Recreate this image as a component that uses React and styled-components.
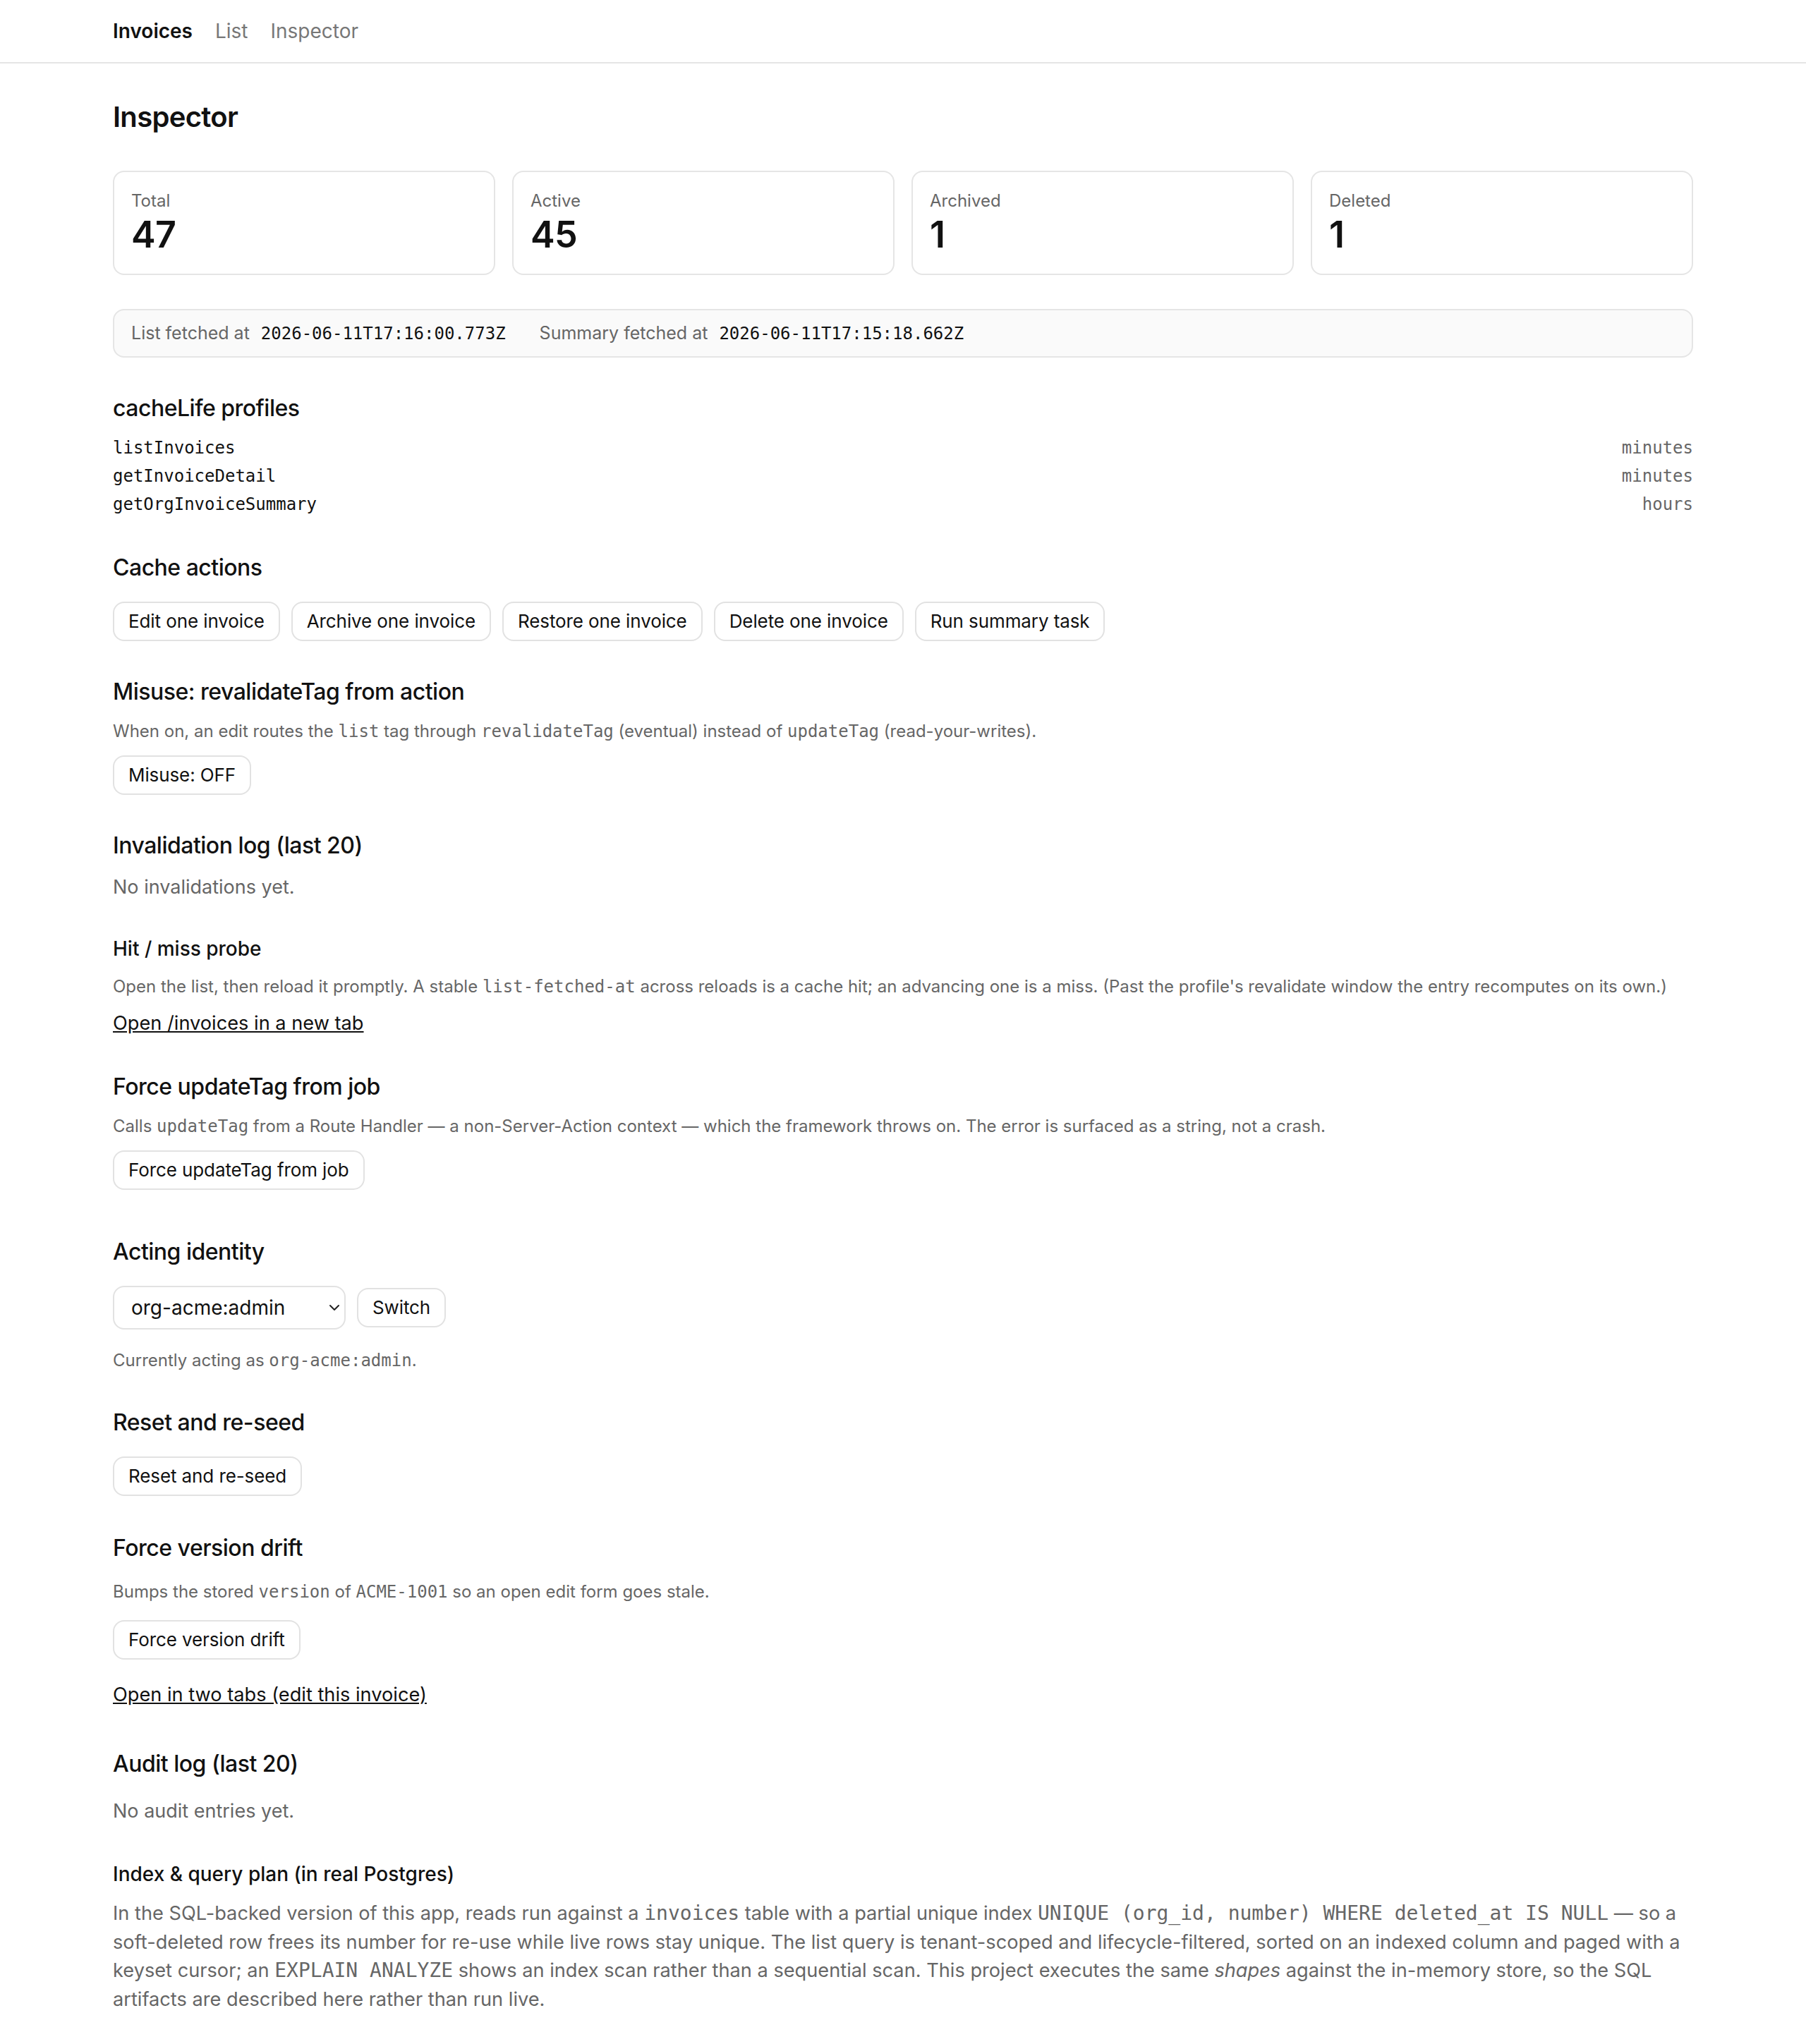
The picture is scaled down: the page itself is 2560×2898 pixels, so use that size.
import React from 'react';
import styled, { createGlobalStyle } from 'styled-components';
import { ChevronDown } from 'lucide-react';

const GlobalStyle = createGlobalStyle`
  html {
    zoom: 2;
  }

  body {
    margin: 0;
    background: #fff;
    color: #111;
    font-family: Inter, "Noto Sans", "Liberation Sans", sans-serif;
    font-size: 14px;
    line-height: 1.45;
  }
`;

const mono = `"DejaVu Sans Mono", "Liberation Mono", monospace`;

const TopBar = styled.header`
  border-bottom: 1px solid #e5e5e5;
`;

const TopNav = styled.nav`
  max-width: 1120px;
  height: 44px;
  margin: 0 auto;
  display: flex;
  align-items: center;
  gap: 16px;
`;

const NavLink = styled.a`
  font-size: 14px;
  text-decoration: none;
  color: ${({ $active }) => ($active ? '#111' : '#777')};
  font-weight: ${({ $active }) => ($active ? 600 : 400)};
`;

const Main = styled.main`
  max-width: 1120px;
  margin: 0 auto;
  padding: 24px 0 24px;
`;

const Title = styled.h1`
  margin: 0;
  font-size: 20px;
  line-height: 28px;
  font-weight: 600;
  letter-spacing: -0.35px;
`;

const StatGrid = styled.div`
  display: grid;
  grid-template-columns: repeat(4, 1fr);
  gap: 12px;
  margin-top: 24px;
`;

const StatCard = styled.div`
  border: 1px solid #e5e5e5;
  border-radius: 8px;
  padding: 12px;
`;

const StatLabel = styled.div`
  font-size: 12px;
  line-height: 17px;
  color: #666;
`;

const StatValue = styled.div`
  font-size: 26px;
  line-height: 31px;
  font-weight: 600;
  letter-spacing: -0.3px;
`;

const FetchBar = styled.div`
  display: flex;
  gap: 24px;
  margin-top: 24px;
  padding: 7px 12px;
  background: #fafafa;
  border: 1px solid #e5e5e5;
  border-radius: 8px;
  font-size: 12.5px;
  line-height: 18px;
  color: #666;
`;

const FetchValue = styled.code`
  margin-left: 8px;
  font-family: ${mono};
  font-size: 12px;
  color: #111;
`;

const Section = styled.section`
  display: flex;
  flex-direction: column;
  align-items: flex-start;
  margin-top: ${({ $top }) => $top}px;
  gap: ${({ $gap }) => $gap}px;
`;

const Heading = styled.h2`
  margin: 0;
  font-size: 16px;
  line-height: 22px;
  font-weight: 500;
  letter-spacing: -0.25px;
`;

const SubHeading = styled.h3`
  margin: 0;
  font-size: 14px;
  line-height: 20px;
  font-weight: 500;
`;

const ProfileList = styled.div`
  align-self: stretch;
  display: flex;
  flex-direction: column;
`;

const ProfileRow = styled.div`
  display: flex;
  justify-content: space-between;
  font-family: ${mono};
  font-size: 12px;
  line-height: 20px;
`;

const ProfileTtl = styled.span`
  color: #666;
`;

const ButtonRow = styled.div`
  display: flex;
  flex-wrap: wrap;
  align-items: center;
  gap: 8px;
`;

const Button = styled.button`
  font-family: inherit;
  font-size: 13px;
  line-height: 18px;
  letter-spacing: -0.05px;
  padding: 4px 10px;
  color: #111;
  background: #fff;
  border: 1px solid #e2e2e2;
  border-radius: 8px;
  cursor: pointer;
`;

const Code = styled.code`
  font-family: ${mono};
  font-size: 1em;
`;

const Note = styled.p`
  margin: 0;
  font-size: 12px;
  line-height: 18px;
  color: #666;
`;

const Muted = styled.p`
  margin: 0;
  font-size: 13.5px;
  line-height: 21px;
  color: #666;
`;

const TextLink = styled.a`
  display: block;
  font-size: 13.6px;
  line-height: 18px;
  color: #111;
  text-decoration: underline;
  margin-top: ${({ $top }) => $top || 0}px;
`;

const SelectWrap = styled.div`
  position: relative;
  display: inline-flex;
`;

const Select = styled.select`
  appearance: none;
  width: 165px;
  height: 31px;
  padding: 0 24px 0 12px;
  font-family: inherit;
  font-size: 14px;
  color: #111;
  background: #fff;
  border: 1px solid #e2e2e2;
  border-radius: 8px;
`;

const SelectChevron = styled(ChevronDown)`
  position: absolute;
  right: 2px;
  top: 50%;
  transform: translateY(-50%);
  color: #222;
  pointer-events: none;
`;

const Paragraph = styled.p`
  margin: 0;
  font-size: 13.6px;
  line-height: 20.3px;
  color: #666;

  ${Code} {
    font-size: 14px;
  }
`;

const profiles = [
  ['listInvoices', 'minutes'],
  ['getInvoiceDetail', 'minutes'],
  ['getOrgInvoiceSummary', 'hours']
];

const stats = [
  ['Total', 47],
  ['Active', 45],
  ['Archived', 1],
  ['Deleted', 1]
];

const cacheActions = [
  'Edit one invoice',
  'Archive one invoice',
  'Restore one invoice',
  'Delete one invoice',
  'Run summary task'
];

export default function App () {
  return (
    <>
      <GlobalStyle />
      <TopBar>
        <TopNav>
          <NavLink href='#' $active>Invoices</NavLink>
          <NavLink href='#'>List</NavLink>
          <NavLink href='#'>Inspector</NavLink>
        </TopNav>
      </TopBar>
      <Main>
        <Title>Inspector</Title>

        <StatGrid>
          {stats.map(([label, value]) => (
            <StatCard key={label}>
              <StatLabel>{label}</StatLabel>
              <StatValue>{value}</StatValue>
            </StatCard>
          ))}
        </StatGrid>

        <FetchBar>
          <span>List fetched at<FetchValue>2026-06-11T17:16:00.773Z</FetchValue></span>
          <span>Summary fetched at<FetchValue>2026-06-11T17:15:18.662Z</FetchValue></span>
        </FetchBar>

        <Section $top={25} $gap={7}>
          <Heading>cacheLife profiles</Heading>
          <ProfileList>
            {profiles.map(([name, ttl]) => (
              <ProfileRow key={name}>
                <span>{name}</span>
                <ProfileTtl>{ttl}</ProfileTtl>
              </ProfileRow>
            ))}
          </ProfileList>
        </Section>

        <Section $top={24} $gap={13}>
          <Heading>Cache actions</Heading>
          <ButtonRow>
            {cacheActions.map((label) => (
              <Button key={label}>{label}</Button>
            ))}
          </ButtonRow>
        </Section>

        <Section $top={25} $gap={8}>
          <Heading>Misuse: revalidateTag from action</Heading>
          <Note>
            When on, an edit routes the <Code>list</Code> tag through <Code>revalidateTag</Code> (eventual)
            instead of <Code>updateTag</Code> (read-your-writes).
          </Note>
          <Button>Misuse: OFF</Button>
        </Section>

        <Section $top={25} $gap={8}>
          <Heading>Invalidation log (last 20)</Heading>
          <Muted>No invalidations yet.</Muted>
        </Section>

        <Section $top={23} $gap={8}>
          <SubHeading>Hit / miss probe</SubHeading>
          <Note>
            Open the list, then reload it promptly. A stable <Code>list-fetched-at</Code> across reloads is a
            cache hit; an advancing one is a miss. (Past the profile's revalidate window the entry recomputes
            on its own.)
          </Note>
          <TextLink href='#'>Open /invoices in a new tab</TextLink>
        </Section>

        <Section $top={25} $gap={8}>
          <Heading>Force updateTag from job</Heading>
          <Note>
            Calls <Code>updateTag</Code> from a Route Handler — a non-Server-Action context — which the
            framework throws on. The error is surfaced as a string, not a crash.
          </Note>
          <Button>Force updateTag from job</Button>
        </Section>

        <Section $top={33} $gap={13}>
          <Heading>Acting identity</Heading>
          <ButtonRow>
            <SelectWrap>
              <Select defaultValue='org-acme:admin'>
                <option value='org-acme:admin'>org-acme:admin</option>
              </Select>
              <SelectChevron size={12} strokeWidth={2} />
            </SelectWrap>
            <Button>Switch</Button>
          </ButtonRow>
          <Note>Currently acting as <Code>org-acme:admin</Code>.</Note>
        </Section>

        <Section $top={24} $gap={13}>
          <Heading>Reset and re-seed</Heading>
          <Button>Reset and re-seed</Button>
        </Section>

        <Section $top={26} $gap={11}>
          <Heading>Force version drift</Heading>
          <Note>
            Bumps the stored <Code>version</Code> of <Code>ACME-1001</Code> so an open edit form goes stale.
          </Note>
          <Button>Force version drift</Button>
          <TextLink href='#' $top={5}>Open in two tabs (edit this invoice)</TextLink>
        </Section>

        <Section $top={29} $gap={12}>
          <Heading>Audit log (last 20)</Heading>
          <Muted>No audit entries yet.</Muted>
        </Section>

        <Section $top={24} $gap={8}>
          <SubHeading>Index &amp; query plan (in real Postgres)</SubHeading>
          <Paragraph>
            In the SQL-backed version of this app, reads run against a <Code>invoices</Code> table with a
            partial unique index <Code>UNIQUE (org_id, number) WHERE deleted_at IS NULL</Code> — so a
            soft-deleted row frees its number for re-use while live rows stay unique. The list query is
            tenant-scoped and lifecycle-filtered, sorted on an indexed column and paged with a keyset cursor;
            an <Code>EXPLAIN ANALYZE</Code> shows an index scan rather than a sequential scan. This project
            executes the same <em>shapes</em> against the in-memory store, so the SQL artifacts are described
            here rather than run live.
          </Paragraph>
        </Section>
      </Main>
    </>
  );
}
